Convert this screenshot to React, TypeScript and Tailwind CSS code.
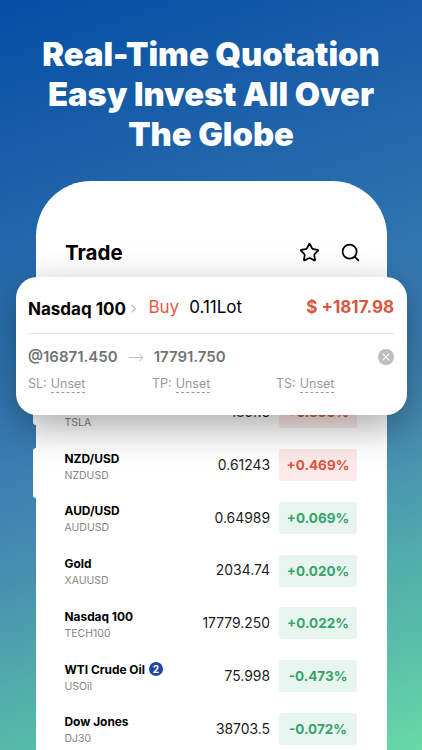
import { Search, Star } from 'lucide-react';
import clsx from 'clsx';

interface Quote {
    name: string;
    code: string;
    price: string;
    change: string;
    tone: 'red' | 'green';
    badge?: number;
}

const quotes: Quote[] = [
    { name: 'Tesla', code: 'TSLA', price: '189.16', change: '+0.836%', tone: 'red' },
    { name: 'NZD/USD', code: 'NZDUSD', price: '0.61243', change: '+0.469%', tone: 'red' },
    { name: 'AUD/USD', code: 'AUDUSD', price: '0.64989', change: '+0.069%', tone: 'green' },
    { name: 'Gold', code: 'XAUUSD', price: '2034.74', change: '+0.020%', tone: 'green' },
    { name: 'Nasdaq 100', code: 'TECH100', price: '17779.250', change: '+0.022%', tone: 'green' },
    { name: 'WTI Crude Oil', code: 'USOil', price: '75.998', change: '-0.473%', tone: 'green', badge: 2 },
    { name: 'Dow Jones', code: 'DJ30', price: '38703.5', change: '-0.072%', tone: 'green' },
];

const limits = ['SL', 'TP', 'TS'];

export default function App() {
    return (
        <div className="h-[750px] w-[422px] overflow-hidden bg-[linear-gradient(162deg,#034ea5_0%,#1c60a9_21%,#2a70ae_37%,#3a7cb1_52%,#468eb0_65%,#52afab_79%,#58bba9_86%,#68d9a7_100%)] font-['Inter',sans-serif]">
            <h1 className="flex h-[181px] flex-col items-center whitespace-nowrap pt-[34px] text-[32.7px] font-black leading-10 text-white">
                <span>Real-Time Quotation</span>
                <span>Easy Invest All Over</span>
                <span>The Globe</span>
            </h1>
            <div className="relative ml-[35.5px] h-[600px] w-[351px] rounded-t-[55px] bg-white">
                {/* side buttons of the phone */}
                <div className="absolute -left-[2.5px] top-[210px] h-[34px] w-[3px] rounded-l-sm bg-white" />
                <div className="absolute -left-[2.5px] top-[267px] h-[50px] w-[3px] rounded-l-sm bg-white" />

                <header className="flex h-24 items-start justify-between pl-[29.5px] pr-[26px] pt-[58px]">
                    <h2 className="text-[20.5px] font-bold leading-7 text-black">Trade</h2>
                    <div className="flex items-center gap-5 pt-[3px] text-black">
                        <Star size={21} strokeWidth={2} />
                        <Search size={21} strokeWidth={1.9} />
                    </div>
                </header>
                <PositionCard />
                <div className="-mt-[28.4px]">
                    {quotes.map((quote) => (
                        <QuoteRow key={quote.code} quote={quote} />
                    ))}
                </div>
            </div>
        </div>
    );
}

function PositionCard() {
    return (
        <div className="relative z-10 -ml-5 h-[137.5px] w-[391px] rounded-[21px] bg-white px-[12.5px] shadow-[0_12px_38px_rgba(0,0,0,0.34)]">
            <div className="flex h-[57px] items-center border-b border-[#e6e6e6] pt-[5px]">
                <span className="pt-[4px] text-[17px] font-bold text-black">Nasdaq 100</span>
                <svg className="ml-[5px] mt-[2px]" width="5" height="9" viewBox="0 0 5 9" fill="none" stroke="#b5b5b5" strokeWidth="1.1">
                    <path d="M.6.7 4.3 4.5.6 8.3" />
                </svg>
                <span className="ml-[12.5px] text-[17px] text-[#e35b48]">Buy</span>
                <span className="ml-[10px] text-[17px] text-black">0.11Lot</span>
                <span className="ml-auto text-[17px] font-bold text-[#d9563f]">$ +1817.98</span>
            </div>
            <div className="flex h-[45px] items-center pt-px text-[15px] font-semibold text-[#737373]">
                <span>@16871.450</span>
                <svg className="ml-[11px]" width="15" height="9" viewBox="0 0 15 9" fill="none" stroke="#bcbcbc" strokeWidth="1">
                    <path d="M0 4.5h14M10 .8l4 3.7-4 3.7" />
                </svg>
                <span className="ml-[10px]">17791.750</span>
                <svg className="ml-auto" width="16" height="16" viewBox="0 0 16 16" fill="none">
                    <circle cx="8" cy="8" r="8" fill="#bdbdc0" />
                    <path d="m4.6 4.6 6.8 6.8m0-6.8-6.8 6.8" stroke="white" strokeWidth="1.2" />
                </svg>
            </div>
            <div className="-mt-[3px] flex text-[12.5px] leading-4 text-[#999]">
                {limits.map((label) => (
                    <div key={label} className="flex w-[124px] shrink-0 gap-[4px]">
                        <span>{label}:</span>
                        <span className="h-[17px] border-b border-dashed border-[#999]">Unset</span>
                    </div>
                ))}
            </div>
        </div>
    );
}

function QuoteRow({ quote }: { quote: Quote }) {
    return (
        <div className="flex h-[52.75px] items-center pl-[29px] pr-[29.5px]">
            <div className="flex-1 pt-[3px]">
                <div className="flex items-center gap-1 text-[11.9px] font-bold leading-[17px] text-black">
                    {quote.name}
                    {quote.badge && (
                        <span className="flex size-[14px] items-center justify-center rounded-full bg-[#23479c] text-[10px] text-white">
                            {quote.badge}
                        </span>
                    )}
                </div>
                <div className="text-[10.5px] leading-[17px] text-[#868686]">{quote.code}</div>
            </div>
            <span className="text-[13.9px] text-[#1c1c1c]">{quote.price}</span>
            <span
                className={clsx(
                    'ml-[9px] flex h-8 w-[78px] items-center justify-center rounded-[3px] text-[13.5px] font-bold',
                    quote.tone === 'red' ? 'bg-[#fbeae9] text-[#d9563f]' : 'bg-[#e7f5ee] text-[#37a36d]'
                )}
            >
                {quote.change}
            </span>
        </div>
    );
}
